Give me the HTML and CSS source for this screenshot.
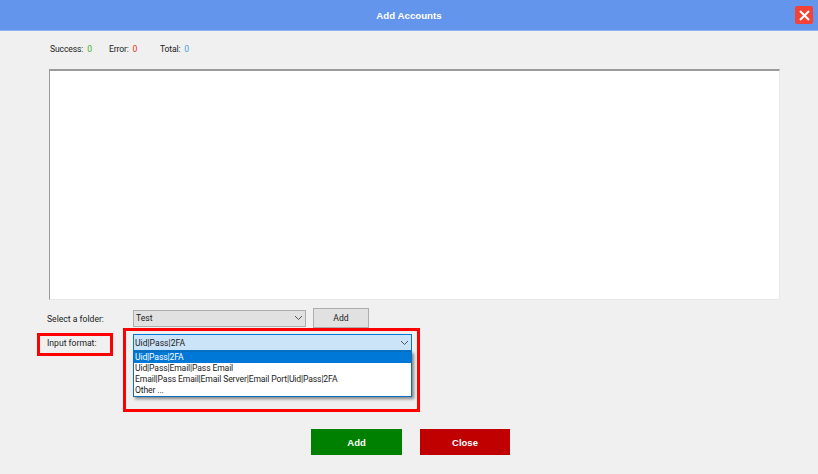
FILE: index.html
```html
<!DOCTYPE html>
<html lang="en">
<head>
<meta charset="utf-8">
<title>Add Accounts</title>
<link rel="stylesheet" href="styles.css">
</head>
<body>
<div class="window">
  <header class="titlebar">
    <span class="title">Add Accounts</span>
    <button class="close-x" aria-label="Close">
      <svg width="11" height="11" viewBox="0 0 11 11"><path d="M1 1L10 10M10 1L1 10" stroke="#fff" stroke-width="2" fill="none"/></svg>
    </button>
  </header>
  <div class="stats">
    <span class="stat stat-success">Success: <b>0</b></span>
    <span class="stat stat-error">Error: <b>0</b></span>
    <span class="stat stat-total">Total: <b>0</b></span>
  </div>
  <div class="input-area"></div>
  <div class="folder-row">
    <span class="folder-label">Select a folder:</span>
    <div class="combo folder-combo">
      <span>Test</span>
      <svg class="chev" width="9" height="6" viewBox="0 0 9 6"><path d="M1 1L4.5 4.5L8 1" stroke="#555" stroke-width="1" fill="none"/></svg>
    </div>
    <button class="small-btn">Add</button>
  </div>
  <div class="format-row">
    <div class="format-label">Input format:</div>
    <div class="format-box">
      <div class="combo format-combo">
        <span>Uid|Pass|2FA</span>
        <svg class="chev" width="9" height="6" viewBox="0 0 9 6"><path d="M1 1L4.5 4.5L8 1" stroke="#555" stroke-width="1" fill="none"/></svg>
      </div>
      <ul class="list">
        <li class="selected">Uid|Pass|2FA</li>
        <li>Uid|Pass|Email|Pass Email</li>
        <li>Email|Pass Email|Email Server|Email Port|Uid|Pass|2FA</li>
        <li>Other ...</li>
      </ul>
    </div>
  </div>
  <div class="actions">
    <button class="action action-add">Add</button>
    <button class="action action-close">Close</button>
  </div>
</div>
</body>
</html>
```

FILE: styles.css
```css
* { box-sizing: border-box; }
html, body { margin: 0; padding: 0; }
body {
  width: 818px;
  height: 474px;
  overflow: hidden;
  background: #f0f0f0;
  font-family: Roboto, "Liberation Sans", sans-serif;
  font-size: 8.6px;
  color: #222;
}
.window { display: flex; flex-direction: column; height: 474px; }
.titlebar {
  height: 31px;
  flex: none;
  background: #6495ed;
  border-bottom: 1px solid #8fb4f3;
  display: flex;
  align-items: center;
  justify-content: center;
  position: relative;
}
.title { color: #fff; font-weight: 700; font-size: 9.7px; font-family: "Liberation Sans", sans-serif; }
.close-x {
  position: absolute;
  right: 5px;
  top: 6px;
  width: 18px;
  height: 18px;
  padding: 0;
  border: 0;
  border-radius: 2px;
  background: #f44336;
  display: flex;
  align-items: center;
  justify-content: center;
}
.stats {
  height: 38px;
  flex: none;
  padding: 12px 0 0 50px;
  display: flex;
  line-height: 13px;
  letter-spacing: -0.15px;
}
.stat b { font-weight: 400; margin-left: 2px; }
.stat-success { width: 59px; }
.stat-error { width: 51px; }
.stat-success b { color: #4caf20; }
.stat-error b { color: #e53020; }
.stat-total b { color: #4a9fe0; }
.input-area {
  margin-left: 49px;
  width: 731px;
  height: 231px;
  flex: none;
  background: #fff;
  border-top: 2px solid #9a9a9a;
  border-left: 1px solid #9a9a9a;
  border-right: 1px solid #e8e8e8;
  border-bottom: 1px solid #e8e8e8;
}
.folder-row {
  margin-top: 8px;
  height: 20px;
  flex: none;
  display: flex;
  align-items: center;
  padding-left: 47px;
}
.folder-label { width: 86px; padding-top: 1px; }
.combo {
  display: flex;
  align-items: center;
  justify-content: space-between;
  padding: 0 2px 0 1px;
  border: 1px solid #adadad;
}
.folder-combo { width: 173px; height: 17px; background: #e1e1e1; padding-left: 2px; }
.small-btn {
  width: 56px;
  height: 20px;
  margin-left: 7px;
  padding: 0;
  font: inherit;
  color: inherit;
  background: #e1e1e1;
  border: 1px solid #adadad;
}
.format-row {
  display: flex;
  align-items: flex-start;
  flex: none;
  padding-left: 37px;
}
.format-label {
  width: 76px;
  height: 23px;
  margin-top: 5px;
  border: 3px solid #f00;
  padding: 1px 0 0 7px;
  line-height: 13px;
}
.format-box {
  width: 297px;
  height: 84px;
  margin-left: 10px;
  border: 3px solid #f00;
  padding: 3px 0 0 7px;
}
.format-combo {
  width: 279px;
  height: 17px;
  background: #cce4f7;
  border-color: #0078d7;
}
.list {
  list-style: none;
  margin: 0;
  padding: 0;
  width: 279px;
  height: 46px;
  background: #fff;
  border: 1px solid #0f6cb8;
  box-shadow: 2px 2px 3px rgba(0,0,0,.45);
  letter-spacing: -0.13px;
}
.list li { height: 11px; line-height: 11px; padding-left: 1px; white-space: nowrap; }
.list .selected { background: #0078d7; color: #fff; }
.actions {
  display: flex;
  gap: 18px;
  padding: 17px 0 0 311px;
  flex: none;
}
.action {
  width: 91px;
  height: 26px;
  padding: 0;
  border: 0;
  color: #fff;
  font-family: "Liberation Sans", sans-serif;
  font-weight: 700;
  font-size: 9.5px;
}
.action-add { background: #008000; }
.action-close { background: #c00000; width: 90px; }
```
